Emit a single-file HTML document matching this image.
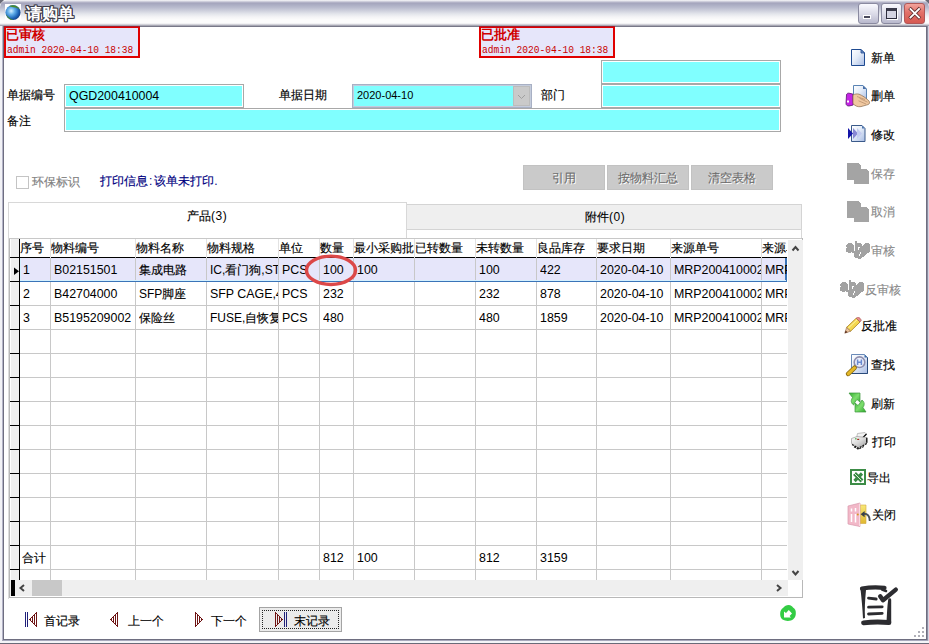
<!DOCTYPE html>
<html><head><meta charset="utf-8">
<style>
*{box-sizing:border-box;margin:0;padding:0}
html,body{width:929px;height:644px;overflow:hidden;background:#fff;font-family:"Liberation Sans",sans-serif;font-size:12px;color:#000}
.a{position:absolute}
#title{left:0;top:0;width:929px;height:26px;border-radius:7px 7px 0 0;background:linear-gradient(#fbfbfb 0px,#dcdce6 1px,#a4a4bc 3px,#acaec4 5px,#bcbed0 8px,#d0d2de 11px,#e4e6ec 14px,#f4f4f6 17px,#fcfcfc 20px,#fcfcfc 23px,#e8e8ec 24px,#a8a8b4 25.5px)}
.t{font-size:12px;line-height:14px;white-space:nowrap}
.inp{background:#80ffff;border:1px solid #a8a8a8;box-shadow:inset 0 0 0 1px #fff}
.rb{border:2px solid #e00000;background:#e6e6fa}
.rb b{position:absolute;left:0px;top:-1px;font-size:13px;line-height:15px;color:#d00000;font-weight:bold}
.rb i{position:absolute;white-space:nowrap;left:1px;top:16px;font-style:normal;font-family:"Liberation Mono",monospace;font-size:11px;line-height:13px;color:#c80000;transform:scaleX(0.87);transform-origin:0 0}
.btn{background:#cacaca;border:1px solid #c2c2c2;color:#6e6e6e;text-align:center;line-height:24px;font-size:12px;text-shadow:1px 1px 0 #fff}
.tbt{font-size:12px;line-height:14px;white-space:nowrap}
.dis{color:#8a8a8a}
.c{-webkit-text-stroke:0.15px currentColor}
#title .c,.rb .c,.tt .c{-webkit-text-stroke:0}
</style></head><body>
<!-- window frame -->
<div class="a" id="title"></div>
<div class="a" style="left:0;top:0;width:4px;height:4px;background:#6a6a78;clip-path:polygon(0 0,100% 0,0 100%)"></div>
<div class="a" style="left:925px;top:0;width:4px;height:4px;background:#6a6a78;clip-path:polygon(0 0,100% 0,100% 100%)"></div>
<div class="a" style="left:0;top:26px;width:929px;height:1px;background:#787888"></div>
<div class="a" style="left:0;top:26px;width:3px;height:618px;background:#f2f2f6"></div>
<div class="a" style="left:2px;top:26px;width:1px;height:614px;background:#b4b4c8"></div>
<div class="a" style="left:3px;top:26px;width:1px;height:614px;background:#6e6e80"></div>
<div class="a" style="left:926px;top:26px;width:1px;height:614px;background:#6e6e80"></div>
<div class="a" style="left:927px;top:26px;width:1px;height:618px;background:#8e8ea2"></div>
<div class="a" style="left:928px;top:26px;width:1px;height:618px;background:#d4d4e2"></div>
<div class="a" style="left:3px;top:639px;width:924px;height:1px;background:#6e6e80"></div>
<div class="a" style="left:2px;top:640px;width:926px;height:1px;background:#a8a8bc"></div>
<div class="a" style="left:0;top:641px;width:929px;height:2px;background:#f4f4f8"></div>
<div class="a" style="left:0;top:643px;width:929px;height:1px;background:#6a6a78"></div>

<!-- title icon + text -->
<div class="a" style="left:5px;top:4px;width:16px;height:16px;background:#fff"></div>
<svg class="a" style="left:5px;top:4px" width="16" height="17">
 <defs><radialGradient id="gl" cx="0.38" cy="0.4" r="0.65"><stop offset="0" stop-color="#d8f0ff"/><stop offset="0.35" stop-color="#64b0ea"/><stop offset="0.75" stop-color="#1c64b8"/><stop offset="1" stop-color="#143e80"/></radialGradient></defs>
 <circle cx="8" cy="8.5" r="7.6" fill="url(#gl)"/>
 <path d="M4 2.2C8 0.2 13 1.5 15.2 6.2C14 4.5 11 3 8 3.2Z" fill="#4a8a2a"/>
 <path d="M1.2 10.5C2 14 5 16 8.5 16.1C6 15 3.5 13.5 1.2 10.5Z" fill="#4a8a2a"/>
</svg>
<div class="a tt" style="left:26px;top:4px;font-size:16px;line-height:20px;font-weight:bold;color:#fff;text-shadow:1px 0 #3c3c48,-1px 0 #3c3c48,0 1px #3c3c48,0 -1px #3c3c48,1px 1px #3c3c48,-1px -1px #3c3c48,1px -1px #3c3c48,-1px 1px #3c3c48"><span class="c">请购单</span></div>

<!-- window buttons -->
<div class="a" style="left:858px;top:3px;width:21px;height:21px;border:1px solid #8a8aa0;border-radius:3px;background:linear-gradient(#fafaff,#d6d6e4 60%,#b8b8cc)"></div>
<div class="a" style="left:863px;top:15px;width:8px;height:4px;background:#4a4a5c;border:1px solid #fff"></div>
<div class="a" style="left:881px;top:3px;width:21px;height:21px;border:1px solid #8a8aa0;border-radius:3px;background:linear-gradient(#fafaff,#d6d6e4 60%,#b8b8cc)"></div>
<div class="a" style="left:886px;top:8px;width:11px;height:11px;border:1px solid #2c2c3c;border-top:3px solid #3a3a4a;background:#d4d4e2;box-shadow:1px 1px 0 #fff"></div>
<div class="a" style="left:904px;top:3px;width:21px;height:21px;border:1px solid #b05858;border-radius:3px;background:linear-gradient(#f2a49c,#e27068 45%,#d65a52)"></div>
<svg class="a" style="left:904px;top:3px" width="21" height="21"><path d="M5.5 5L16 15.5M16 5L5.5 15.5" stroke="#5a2a2a" stroke-width="3.4"/><path d="M5.8 5.3L15.7 15.2M15.7 5.3L5.8 15.2" stroke="#fff" stroke-width="1.9"/></svg>

<!-- red status boxes -->
<div class="a rb" style="left:4px;top:26px;width:136px;height:32px"><b><span class="c">已审核</span></b><i>admin 2020-04-10 18:38</i></div>
<div class="a rb" style="left:479px;top:26px;width:136px;height:32px"><b><span class="c">已批准</span></b><i>admin 2020-04-10 18:38</i></div>
<div class="a" style="left:4px;top:26px;width:136px;height:1px;background:#a81828"></div>
<div class="a" style="left:479px;top:26px;width:136px;height:1px;background:#a81828"></div>

<!-- form -->
<div class="a inp" style="left:601px;top:60px;width:180px;height:24px"></div>
<div class="a t" style="left:7px;top:88px"><span class="c">单据编号</span></div>
<div class="a inp" style="left:64px;top:84px;width:180px;height:24px"></div>
<div class="a t" style="left:69px;top:89px;font-size:12.4px">QGD200410004</div>
<div class="a t" style="left:279px;top:88px"><span class="c">单据日期</span></div>
<div class="a" style="left:352px;top:84px;width:180px;height:24px;background:#80ffff;border:1px solid #a8b0c4;box-shadow:inset 0 0 0 1px #c4ccdc"></div>
<div class="a t" style="left:357px;top:88px;font-size:11px">2020-04-10</div>
<div class="a" style="left:513px;top:86px;width:17px;height:20px;background:#cacaca;border:1px solid #bcbcbc"></div>
<svg class="a" style="left:513px;top:86px" width="17" height="20"><path d="M5 9L8.5 12.5L12 9" stroke="#a0a0a0" stroke-width="1" fill="none"/></svg>
<div class="a t" style="left:541px;top:88px"><span class="c">部门</span></div>
<div class="a inp" style="left:601px;top:84px;width:180px;height:24px"></div>
<div class="a t" style="left:7px;top:114px"><span class="c">备注</span></div>
<div class="a inp" style="left:64px;top:108px;width:717px;height:24px"></div>

<!-- checkbox + print info -->
<div class="a" style="left:16px;top:176px;width:13px;height:13px;border:1px solid #c4c4c4;background:#fff"></div>
<div class="a t" style="left:32px;top:175px;color:#808080"><span class="c">环保标识</span></div>
<div class="a t" style="left:100px;top:174px;color:#000080"><span class="c">打印信息</span><span style="margin:0 2px 0 1px">:</span><span class="c">该单未打印</span>.</div>

<!-- disabled buttons -->
<div class="a btn" style="left:523px;top:165px;width:82px;height:25px"><span class="c">引用</span></div>
<div class="a btn" style="left:607px;top:165px;width:82px;height:25px"><span class="c">按物料汇总</span></div>
<div class="a btn" style="left:691px;top:165px;width:82px;height:25px"><span class="c">清空表格</span></div>

<!-- tabs -->
<div class="a" style="left:406px;top:204px;width:396px;height:26px;background:#efefef;border:1px solid #d4d4d4"></div>
<div class="a" style="left:8px;top:202px;width:399px;height:40px;background:#fff;border:1px solid #d8d8d8;border-bottom:0"></div>
<div class="a" style="left:406px;top:229px;width:396px;height:12px;border-right:1px solid #d8d8d8"></div>
<div class="a t" style="left:187px;top:209px"><span class="c">产品</span><span style="letter-spacing:0.6px">(3)</span></div>
<div class="a t" style="left:585px;top:210px"><span class="c">附件</span><span style="letter-spacing:0.6px">(0)</span></div>

<!-- grid outer -->
<div class="a" style="left:8px;top:238px;width:1px;height:361px;background:#dcdcdc"></div>
<div class="a" style="left:9px;top:238px;width:794px;height:360px;border:1px solid #b8b8b8;border-top:0;background:#fff"></div>
<div class="a" style="left:10px;top:238px;width:777px;height:342px;overflow:hidden;background:#fff">
<div class="a" style="left:1px;top:1px;width:8px;height:400px;background:#efefef"></div>
<div class="a" style="left:0;top:0;width:800px;height:1px;background:#c8c8c8"></div>
<div class="a" style="left:9px;top:43px;width:800px;height:1px;background:#c8c8c8"></div>
<div class="a" style="left:0;top:43px;width:9px;height:1px;background:#000"></div>
<div class="a" style="left:9px;top:67px;width:800px;height:1px;background:#c8c8c8"></div>
<div class="a" style="left:0;top:67px;width:9px;height:1px;background:#000"></div>
<div class="a" style="left:9px;top:91px;width:800px;height:1px;background:#c8c8c8"></div>
<div class="a" style="left:0;top:91px;width:9px;height:1px;background:#000"></div>
<div class="a" style="left:9px;top:115px;width:800px;height:1px;background:#c8c8c8"></div>
<div class="a" style="left:0;top:115px;width:9px;height:1px;background:#000"></div>
<div class="a" style="left:9px;top:139px;width:800px;height:1px;background:#c8c8c8"></div>
<div class="a" style="left:0;top:139px;width:9px;height:1px;background:#000"></div>
<div class="a" style="left:9px;top:163px;width:800px;height:1px;background:#c8c8c8"></div>
<div class="a" style="left:0;top:163px;width:9px;height:1px;background:#000"></div>
<div class="a" style="left:9px;top:187px;width:800px;height:1px;background:#c8c8c8"></div>
<div class="a" style="left:0;top:187px;width:9px;height:1px;background:#000"></div>
<div class="a" style="left:9px;top:211px;width:800px;height:1px;background:#c8c8c8"></div>
<div class="a" style="left:0;top:211px;width:9px;height:1px;background:#000"></div>
<div class="a" style="left:9px;top:235px;width:800px;height:1px;background:#c8c8c8"></div>
<div class="a" style="left:0;top:235px;width:9px;height:1px;background:#000"></div>
<div class="a" style="left:9px;top:259px;width:800px;height:1px;background:#c8c8c8"></div>
<div class="a" style="left:0;top:259px;width:9px;height:1px;background:#000"></div>
<div class="a" style="left:9px;top:283px;width:800px;height:1px;background:#c8c8c8"></div>
<div class="a" style="left:0;top:283px;width:9px;height:1px;background:#000"></div>
<div class="a" style="left:9px;top:307px;width:800px;height:1px;background:#c8c8c8"></div>
<div class="a" style="left:0;top:307px;width:9px;height:1px;background:#000"></div>
<div class="a" style="left:9px;top:331px;width:800px;height:1px;background:#c8c8c8"></div>
<div class="a" style="left:0;top:331px;width:9px;height:1px;background:#000"></div>
<div class="a" style="left:9px;top:355px;width:800px;height:1px;background:#c8c8c8"></div>
<div class="a" style="left:0;top:355px;width:9px;height:1px;background:#000"></div>
<div class="a" style="left:0;top:19px;width:800px;height:1px;background:#000"></div>
<div class="a" style="left:40px;top:1px;width:1px;height:19px;background:#e2e2e2"></div>
<div class="a" style="left:40px;top:20px;width:1px;height:400px;background:#c8c8c8"></div>
<div class="a" style="left:125px;top:1px;width:1px;height:19px;background:#e2e2e2"></div>
<div class="a" style="left:125px;top:20px;width:1px;height:400px;background:#c8c8c8"></div>
<div class="a" style="left:196px;top:1px;width:1px;height:19px;background:#e2e2e2"></div>
<div class="a" style="left:196px;top:20px;width:1px;height:400px;background:#c8c8c8"></div>
<div class="a" style="left:268px;top:1px;width:1px;height:19px;background:#e2e2e2"></div>
<div class="a" style="left:268px;top:20px;width:1px;height:400px;background:#c8c8c8"></div>
<div class="a" style="left:309px;top:1px;width:1px;height:19px;background:#e2e2e2"></div>
<div class="a" style="left:309px;top:20px;width:1px;height:400px;background:#c8c8c8"></div>
<div class="a" style="left:343px;top:1px;width:1px;height:19px;background:#e2e2e2"></div>
<div class="a" style="left:343px;top:20px;width:1px;height:400px;background:#c8c8c8"></div>
<div class="a" style="left:404px;top:1px;width:1px;height:19px;background:#e2e2e2"></div>
<div class="a" style="left:404px;top:20px;width:1px;height:400px;background:#c8c8c8"></div>
<div class="a" style="left:465px;top:1px;width:1px;height:19px;background:#e2e2e2"></div>
<div class="a" style="left:465px;top:20px;width:1px;height:400px;background:#c8c8c8"></div>
<div class="a" style="left:526px;top:1px;width:1px;height:19px;background:#e2e2e2"></div>
<div class="a" style="left:526px;top:20px;width:1px;height:400px;background:#c8c8c8"></div>
<div class="a" style="left:586px;top:1px;width:1px;height:19px;background:#e2e2e2"></div>
<div class="a" style="left:586px;top:20px;width:1px;height:400px;background:#c8c8c8"></div>
<div class="a" style="left:660px;top:1px;width:1px;height:19px;background:#e2e2e2"></div>
<div class="a" style="left:660px;top:20px;width:1px;height:400px;background:#c8c8c8"></div>
<div class="a" style="left:751px;top:1px;width:1px;height:19px;background:#e2e2e2"></div>
<div class="a" style="left:751px;top:20px;width:1px;height:400px;background:#c8c8c8"></div>
<div class="a" style="left:9px;top:1px;width:1px;height:400px;background:#000"></div>
<div class="a" style="left:10px;top:20px;width:767px;height:24px;background:#e6e6fa;border:1px solid #3a74b8;border-left:0;border-top:0"></div>
<div class="a" style="left:10px;top:20px;width:766px;height:23px;border-right:1px solid #3a74b8"></div>
<div class="a" style="left:40px;top:20px;width:1px;height:23px;background:#c8c8c8"></div>
<div class="a" style="left:125px;top:20px;width:1px;height:23px;background:#c8c8c8"></div>
<div class="a" style="left:196px;top:20px;width:1px;height:23px;background:#c8c8c8"></div>
<div class="a" style="left:268px;top:20px;width:1px;height:23px;background:#c8c8c8"></div>
<div class="a" style="left:309px;top:20px;width:1px;height:23px;background:#c8c8c8"></div>
<div class="a" style="left:343px;top:20px;width:1px;height:23px;background:#c8c8c8"></div>
<div class="a" style="left:404px;top:20px;width:1px;height:23px;background:#c8c8c8"></div>
<div class="a" style="left:465px;top:20px;width:1px;height:23px;background:#c8c8c8"></div>
<div class="a" style="left:526px;top:20px;width:1px;height:23px;background:#c8c8c8"></div>
<div class="a" style="left:586px;top:20px;width:1px;height:23px;background:#c8c8c8"></div>
<div class="a" style="left:660px;top:20px;width:1px;height:23px;background:#c8c8c8"></div>
<div class="a" style="left:751px;top:20px;width:1px;height:23px;background:#c8c8c8"></div>
<svg class="a" style="left:0;top:0" width="20" height="300"><path d="M4 29.5L4 37L9 33.25Z" fill="#000"/></svg>
<div class="a" style="left:10px;top:20px;width:1px;height:23px;background:#d4f0ff"></div>
<div class="a" style="left:10px;top:42px;width:766px;height:1px;background:#d4f0ff"></div>
<div class="a t" style="left:10px;top:3px;width:30px;overflow:hidden;white-space:nowrap"><span class="c">序号</span></div>
<div class="a t" style="left:41px;top:3px;width:84px;overflow:hidden;white-space:nowrap"><span class="c">物料编号</span></div>
<div class="a t" style="left:126px;top:3px;width:70px;overflow:hidden;white-space:nowrap"><span class="c">物料名称</span></div>
<div class="a t" style="left:197px;top:3px;width:71px;overflow:hidden;white-space:nowrap"><span class="c">物料规格</span></div>
<div class="a t" style="left:269px;top:3px;width:40px;overflow:hidden;white-space:nowrap"><span class="c">单位</span></div>
<div class="a t" style="left:310px;top:3px;width:33px;overflow:hidden;white-space:nowrap"><span class="c">数量</span></div>
<div class="a t" style="left:344px;top:3px;width:60px;overflow:hidden;white-space:nowrap"><span class="c">最小采购批量</span></div>
<div class="a t" style="left:405px;top:3px;width:60px;overflow:hidden;white-space:nowrap"><span class="c">已转数量</span></div>
<div class="a t" style="left:466px;top:3px;width:60px;overflow:hidden;white-space:nowrap"><span class="c">未转数量</span></div>
<div class="a t" style="left:527px;top:3px;width:59px;overflow:hidden;white-space:nowrap"><span class="c">良品库存</span></div>
<div class="a t" style="left:587px;top:3px;width:73px;overflow:hidden;white-space:nowrap"><span class="c">要求日期</span></div>
<div class="a t" style="left:661px;top:3px;width:90px;overflow:hidden;white-space:nowrap"><span class="c">来源单号</span></div>
<div class="a t" style="left:752px;top:3px;width:25px;overflow:hidden;white-space:nowrap"><span class="c">来源单位</span></div>
<div class="a t" style="left:13px;top:25px;width:27px;overflow:hidden;white-space:nowrap;font-size:12.4px">1</div>
<div class="a t" style="left:44px;top:25px;width:81px;overflow:hidden;white-space:nowrap;font-size:12.4px">B02151501</div>
<div class="a t" style="left:129px;top:25px;width:67px;overflow:hidden;white-space:nowrap"><span class="c">集成电路</span></div>
<div class="a t" style="left:200px;top:25px;width:68px;overflow:hidden;white-space:nowrap">IC,<span class="c">看门狗</span>,STM</div>
<div class="a t" style="left:272px;top:25px;width:37px;overflow:hidden;white-space:nowrap;font-size:12.4px">PCS</div>
<div class="a t" style="left:313px;top:25px;width:30px;overflow:hidden;white-space:nowrap;font-size:12.4px">100</div>
<div class="a t" style="left:347px;top:25px;width:57px;overflow:hidden;white-space:nowrap;font-size:12.4px">100</div>
<div class="a t" style="left:469px;top:25px;width:57px;overflow:hidden;white-space:nowrap;font-size:12.4px">100</div>
<div class="a t" style="left:530px;top:25px;width:56px;overflow:hidden;white-space:nowrap;font-size:12.4px">422</div>
<div class="a t" style="left:590px;top:25px;width:70px;overflow:hidden;white-space:nowrap;font-size:12.4px">2020-04-10</div>
<div class="a t" style="left:664px;top:25px;width:87px;overflow:hidden;white-space:nowrap;font-size:12.4px">MRP200410002</div>
<div class="a t" style="left:755px;top:25px;width:22px;overflow:hidden;white-space:nowrap;font-size:12.4px">MRP200410002</div>
<div class="a t" style="left:13px;top:49px;width:27px;overflow:hidden;white-space:nowrap;font-size:12.4px">2</div>
<div class="a t" style="left:44px;top:49px;width:81px;overflow:hidden;white-space:nowrap;font-size:12.4px">B42704000</div>
<div class="a t" style="left:129px;top:49px;width:67px;overflow:hidden;white-space:nowrap">SFP<span class="c">脚座</span></div>
<div class="a t" style="left:200px;top:49px;width:68px;overflow:hidden;white-space:nowrap;font-size:12.4px">SFP CAGE,4PIN</div>
<div class="a t" style="left:272px;top:49px;width:37px;overflow:hidden;white-space:nowrap;font-size:12.4px">PCS</div>
<div class="a t" style="left:313px;top:49px;width:30px;overflow:hidden;white-space:nowrap;font-size:12.4px">232</div>
<div class="a t" style="left:469px;top:49px;width:57px;overflow:hidden;white-space:nowrap;font-size:12.4px">232</div>
<div class="a t" style="left:530px;top:49px;width:56px;overflow:hidden;white-space:nowrap;font-size:12.4px">878</div>
<div class="a t" style="left:590px;top:49px;width:70px;overflow:hidden;white-space:nowrap;font-size:12.4px">2020-04-10</div>
<div class="a t" style="left:664px;top:49px;width:87px;overflow:hidden;white-space:nowrap;font-size:12.4px">MRP200410002</div>
<div class="a t" style="left:755px;top:49px;width:22px;overflow:hidden;white-space:nowrap;font-size:12.4px">MRP200410002</div>
<div class="a t" style="left:13px;top:73px;width:27px;overflow:hidden;white-space:nowrap;font-size:12.4px">3</div>
<div class="a t" style="left:44px;top:73px;width:81px;overflow:hidden;white-space:nowrap;font-size:12.4px">B5195209002</div>
<div class="a t" style="left:129px;top:73px;width:67px;overflow:hidden;white-space:nowrap"><span class="c">保险丝</span></div>
<div class="a t" style="left:200px;top:73px;width:68px;overflow:hidden;white-space:nowrap">FUSE,<span class="c">自恢复</span></div>
<div class="a t" style="left:272px;top:73px;width:37px;overflow:hidden;white-space:nowrap;font-size:12.4px">PCS</div>
<div class="a t" style="left:313px;top:73px;width:30px;overflow:hidden;white-space:nowrap;font-size:12.4px">480</div>
<div class="a t" style="left:469px;top:73px;width:57px;overflow:hidden;white-space:nowrap;font-size:12.4px">480</div>
<div class="a t" style="left:530px;top:73px;width:56px;overflow:hidden;white-space:nowrap;font-size:12.4px">1859</div>
<div class="a t" style="left:590px;top:73px;width:70px;overflow:hidden;white-space:nowrap;font-size:12.4px">2020-04-10</div>
<div class="a t" style="left:664px;top:73px;width:87px;overflow:hidden;white-space:nowrap;font-size:12.4px">MRP200410002</div>
<div class="a t" style="left:755px;top:73px;width:22px;overflow:hidden;white-space:nowrap;font-size:12.4px">MRP200410002</div>
<div class="a t" style="left:12px;top:313px;width:28px;overflow:hidden;white-space:nowrap"><span class="c">合计</span></div>
<div class="a t" style="left:313px;top:313px;width:30px;overflow:hidden;white-space:nowrap;font-size:12.4px">812</div>
<div class="a t" style="left:347px;top:313px;width:57px;overflow:hidden;white-space:nowrap;font-size:12.4px">100</div>
<div class="a t" style="left:469px;top:313px;width:57px;overflow:hidden;white-space:nowrap;font-size:12.4px">812</div>
<div class="a t" style="left:530px;top:313px;width:56px;overflow:hidden;white-space:nowrap;font-size:12.4px">3159</div>
</div>
<!-- v scrollbar -->
<div class="a" style="left:9px;top:238px;width:793px;height:1px;background:#c8c8c8"></div>
<div class="a" style="left:788px;top:240px;width:15px;height:340px;background:#efefef"></div>
<svg class="a" style="left:788px;top:238px" width="15" height="342"><path d="M4.5 12.5L7.5 9L10.5 12.5" stroke="#444" stroke-width="2" fill="none"/><path d="M4.5 333L7.5 336.5L10.5 333" stroke="#444" stroke-width="2" fill="none"/></svg>
<!-- h scrollbar -->
<div class="a" style="left:10px;top:580px;width:778px;height:16px;background:#efefef"></div>
<div class="a" style="left:11px;top:580px;width:4px;height:16px;background:#000"></div>
<div class="a" style="left:32px;top:580px;width:30px;height:16px;background:#c8c8c8"></div>
<svg class="a" style="left:10px;top:580px" width="778" height="16"><path d="M14 5L10.5 8L14 11" stroke="#444" stroke-width="2" fill="none"/><path d="M767 5L770.5 8L767 11" stroke="#444" stroke-width="2" fill="none"/></svg>

<!-- nav -->
<div class="a t" style="left:44px;top:614px;font-size:12px"><span class="c">首记录</span></div>
<div class="a t" style="left:128px;top:614px;font-size:12px"><span class="c">上一个</span></div>
<div class="a t" style="left:211px;top:614px;font-size:12px"><span class="c">下一个</span></div>
<div class="a" style="left:259px;top:607px;width:83px;height:25px;background:#ebebeb;border:1px solid #a4a4a4"></div>
<div class="a" style="left:262px;top:610px;width:77px;height:19px;border:1px dotted #222"></div>
<svg class="a" style="left:0;top:0" width="400" height="644" shape-rendering="crispEdges"><g fill="#20207a"><rect x="25" y="612" width="1" height="15"/><rect x="27" y="612" width="1" height="15"/><rect x="284" y="612" width="1" height="15"/><rect x="286" y="612" width="1" height="15"/></g><g fill="#6e1414"><rect x="29" y="619" width="1" height="1"/><rect x="30" y="618" width="1" height="1"/><rect x="30" y="619" width="1" height="1"/><rect x="30" y="620" width="1" height="1"/><rect x="31" y="617" width="1" height="1"/><rect x="31" y="621" width="1" height="1"/><rect x="32" y="616" width="1" height="1"/><rect x="32" y="617" width="1" height="1"/><rect x="32" y="618" width="1" height="1"/><rect x="32" y="619" width="1" height="1"/><rect x="32" y="620" width="1" height="1"/><rect x="32" y="621" width="1" height="1"/><rect x="32" y="622" width="1" height="1"/><rect x="33" y="615" width="1" height="1"/><rect x="33" y="623" width="1" height="1"/><rect x="34" y="614" width="1" height="1"/><rect x="34" y="615" width="1" height="1"/><rect x="34" y="616" width="1" height="1"/><rect x="34" y="617" width="1" height="1"/><rect x="34" y="618" width="1" height="1"/><rect x="34" y="619" width="1" height="1"/><rect x="34" y="620" width="1" height="1"/><rect x="34" y="621" width="1" height="1"/><rect x="34" y="622" width="1" height="1"/><rect x="34" y="623" width="1" height="1"/><rect x="34" y="624" width="1" height="1"/><rect x="35" y="613" width="1" height="1"/><rect x="35" y="625" width="1" height="1"/><rect x="36" y="612" width="1" height="1"/><rect x="36" y="613" width="1" height="1"/><rect x="36" y="614" width="1" height="1"/><rect x="36" y="615" width="1" height="1"/><rect x="36" y="616" width="1" height="1"/><rect x="36" y="617" width="1" height="1"/><rect x="36" y="618" width="1" height="1"/><rect x="36" y="619" width="1" height="1"/><rect x="36" y="620" width="1" height="1"/><rect x="36" y="621" width="1" height="1"/><rect x="36" y="622" width="1" height="1"/><rect x="36" y="623" width="1" height="1"/><rect x="36" y="624" width="1" height="1"/><rect x="36" y="625" width="1" height="1"/><rect x="36" y="626" width="1" height="1"/><rect x="110" y="619" width="1" height="1"/><rect x="111" y="618" width="1" height="1"/><rect x="111" y="619" width="1" height="1"/><rect x="111" y="620" width="1" height="1"/><rect x="112" y="617" width="1" height="1"/><rect x="112" y="621" width="1" height="1"/><rect x="113" y="616" width="1" height="1"/><rect x="113" y="617" width="1" height="1"/><rect x="113" y="618" width="1" height="1"/><rect x="113" y="619" width="1" height="1"/><rect x="113" y="620" width="1" height="1"/><rect x="113" y="621" width="1" height="1"/><rect x="113" y="622" width="1" height="1"/><rect x="114" y="615" width="1" height="1"/><rect x="114" y="623" width="1" height="1"/><rect x="115" y="614" width="1" height="1"/><rect x="115" y="615" width="1" height="1"/><rect x="115" y="616" width="1" height="1"/><rect x="115" y="617" width="1" height="1"/><rect x="115" y="618" width="1" height="1"/><rect x="115" y="619" width="1" height="1"/><rect x="115" y="620" width="1" height="1"/><rect x="115" y="621" width="1" height="1"/><rect x="115" y="622" width="1" height="1"/><rect x="115" y="623" width="1" height="1"/><rect x="115" y="624" width="1" height="1"/><rect x="116" y="613" width="1" height="1"/><rect x="116" y="625" width="1" height="1"/><rect x="117" y="612" width="1" height="1"/><rect x="117" y="613" width="1" height="1"/><rect x="117" y="614" width="1" height="1"/><rect x="117" y="615" width="1" height="1"/><rect x="117" y="616" width="1" height="1"/><rect x="117" y="617" width="1" height="1"/><rect x="117" y="618" width="1" height="1"/><rect x="117" y="619" width="1" height="1"/><rect x="117" y="620" width="1" height="1"/><rect x="117" y="621" width="1" height="1"/><rect x="117" y="622" width="1" height="1"/><rect x="117" y="623" width="1" height="1"/><rect x="117" y="624" width="1" height="1"/><rect x="117" y="625" width="1" height="1"/><rect x="117" y="626" width="1" height="1"/><rect x="202" y="619" width="1" height="1"/><rect x="201" y="618" width="1" height="1"/><rect x="201" y="619" width="1" height="1"/><rect x="201" y="620" width="1" height="1"/><rect x="200" y="617" width="1" height="1"/><rect x="200" y="621" width="1" height="1"/><rect x="199" y="616" width="1" height="1"/><rect x="199" y="617" width="1" height="1"/><rect x="199" y="618" width="1" height="1"/><rect x="199" y="619" width="1" height="1"/><rect x="199" y="620" width="1" height="1"/><rect x="199" y="621" width="1" height="1"/><rect x="199" y="622" width="1" height="1"/><rect x="198" y="615" width="1" height="1"/><rect x="198" y="623" width="1" height="1"/><rect x="197" y="614" width="1" height="1"/><rect x="197" y="615" width="1" height="1"/><rect x="197" y="616" width="1" height="1"/><rect x="197" y="617" width="1" height="1"/><rect x="197" y="618" width="1" height="1"/><rect x="197" y="619" width="1" height="1"/><rect x="197" y="620" width="1" height="1"/><rect x="197" y="621" width="1" height="1"/><rect x="197" y="622" width="1" height="1"/><rect x="197" y="623" width="1" height="1"/><rect x="197" y="624" width="1" height="1"/><rect x="196" y="613" width="1" height="1"/><rect x="196" y="625" width="1" height="1"/><rect x="195" y="612" width="1" height="1"/><rect x="195" y="613" width="1" height="1"/><rect x="195" y="614" width="1" height="1"/><rect x="195" y="615" width="1" height="1"/><rect x="195" y="616" width="1" height="1"/><rect x="195" y="617" width="1" height="1"/><rect x="195" y="618" width="1" height="1"/><rect x="195" y="619" width="1" height="1"/><rect x="195" y="620" width="1" height="1"/><rect x="195" y="621" width="1" height="1"/><rect x="195" y="622" width="1" height="1"/><rect x="195" y="623" width="1" height="1"/><rect x="195" y="624" width="1" height="1"/><rect x="195" y="625" width="1" height="1"/><rect x="195" y="626" width="1" height="1"/><rect x="282" y="619" width="1" height="1"/><rect x="281" y="618" width="1" height="1"/><rect x="281" y="619" width="1" height="1"/><rect x="281" y="620" width="1" height="1"/><rect x="280" y="617" width="1" height="1"/><rect x="280" y="621" width="1" height="1"/><rect x="279" y="616" width="1" height="1"/><rect x="279" y="617" width="1" height="1"/><rect x="279" y="618" width="1" height="1"/><rect x="279" y="619" width="1" height="1"/><rect x="279" y="620" width="1" height="1"/><rect x="279" y="621" width="1" height="1"/><rect x="279" y="622" width="1" height="1"/><rect x="278" y="615" width="1" height="1"/><rect x="278" y="623" width="1" height="1"/><rect x="277" y="614" width="1" height="1"/><rect x="277" y="615" width="1" height="1"/><rect x="277" y="616" width="1" height="1"/><rect x="277" y="617" width="1" height="1"/><rect x="277" y="618" width="1" height="1"/><rect x="277" y="619" width="1" height="1"/><rect x="277" y="620" width="1" height="1"/><rect x="277" y="621" width="1" height="1"/><rect x="277" y="622" width="1" height="1"/><rect x="277" y="623" width="1" height="1"/><rect x="277" y="624" width="1" height="1"/><rect x="276" y="613" width="1" height="1"/><rect x="276" y="625" width="1" height="1"/><rect x="275" y="612" width="1" height="1"/><rect x="275" y="613" width="1" height="1"/><rect x="275" y="614" width="1" height="1"/><rect x="275" y="615" width="1" height="1"/><rect x="275" y="616" width="1" height="1"/><rect x="275" y="617" width="1" height="1"/><rect x="275" y="618" width="1" height="1"/><rect x="275" y="619" width="1" height="1"/><rect x="275" y="620" width="1" height="1"/><rect x="275" y="621" width="1" height="1"/><rect x="275" y="622" width="1" height="1"/><rect x="275" y="623" width="1" height="1"/><rect x="275" y="624" width="1" height="1"/><rect x="275" y="625" width="1" height="1"/><rect x="275" y="626" width="1" height="1"/></g></svg><svg class="a" style="left:0;top:0" width="929" height="644" shape-rendering="crispEdges"><g fill="#a2a2a2"><rect x="855" y="241" width="2" height="1"/><rect x="855" y="242" width="2" height="1"/><rect x="848" y="243" width="4" height="1"/><rect x="855" y="243" width="6" height="1"/><rect x="865" y="243" width="4" height="1"/><rect x="847" y="244" width="6" height="1"/><rect x="855" y="244" width="7" height="1"/><rect x="864" y="244" width="6" height="1"/><rect x="846" y="245" width="8" height="1"/><rect x="855" y="245" width="7" height="1"/><rect x="863" y="245" width="7" height="1"/><rect x="846" y="246" width="8" height="1"/><rect x="855" y="246" width="15" height="1"/><rect x="847" y="247" width="7" height="1"/><rect x="855" y="247" width="3" height="1"/><rect x="860" y="247" width="10" height="1"/><rect x="846" y="248" width="8" height="1"/><rect x="855" y="248" width="3" height="1"/><rect x="859" y="248" width="11" height="1"/><rect x="846" y="249" width="8" height="1"/><rect x="855" y="249" width="3" height="1"/><rect x="859" y="249" width="11" height="1"/><rect x="846" y="250" width="8" height="1"/><rect x="855" y="250" width="15" height="1"/><rect x="846" y="251" width="8" height="1"/><rect x="854" y="251" width="16" height="1"/><rect x="848" y="252" width="3" height="1"/><rect x="852" y="252" width="2" height="1"/><rect x="854" y="252" width="6" height="1"/><rect x="861" y="252" width="8" height="1"/><rect x="854" y="253" width="6" height="1"/><rect x="861" y="253" width="6" height="1"/><rect x="854" y="254" width="5" height="1"/><rect x="860" y="254" width="6" height="1"/><rect x="854" y="255" width="5" height="1"/><rect x="860" y="255" width="5" height="1"/><rect x="854" y="256" width="10" height="1"/><rect x="855" y="257" width="7" height="1"/><rect x="858" y="258" width="3" height="1"/></g><g fill="#a2a2a2"><rect x="849" y="280" width="2" height="1"/><rect x="849" y="281" width="2" height="1"/><rect x="842" y="282" width="4" height="1"/><rect x="849" y="282" width="6" height="1"/><rect x="859" y="282" width="4" height="1"/><rect x="841" y="283" width="6" height="1"/><rect x="849" y="283" width="7" height="1"/><rect x="858" y="283" width="6" height="1"/><rect x="840" y="284" width="8" height="1"/><rect x="849" y="284" width="7" height="1"/><rect x="857" y="284" width="7" height="1"/><rect x="840" y="285" width="8" height="1"/><rect x="849" y="285" width="15" height="1"/><rect x="841" y="286" width="7" height="1"/><rect x="849" y="286" width="3" height="1"/><rect x="854" y="286" width="10" height="1"/><rect x="840" y="287" width="8" height="1"/><rect x="849" y="287" width="3" height="1"/><rect x="853" y="287" width="11" height="1"/><rect x="840" y="288" width="8" height="1"/><rect x="849" y="288" width="3" height="1"/><rect x="853" y="288" width="11" height="1"/><rect x="840" y="289" width="8" height="1"/><rect x="849" y="289" width="15" height="1"/><rect x="840" y="290" width="8" height="1"/><rect x="848" y="290" width="16" height="1"/><rect x="842" y="291" width="3" height="1"/><rect x="846" y="291" width="2" height="1"/><rect x="848" y="291" width="6" height="1"/><rect x="855" y="291" width="8" height="1"/><rect x="848" y="292" width="6" height="1"/><rect x="855" y="292" width="6" height="1"/><rect x="848" y="293" width="5" height="1"/><rect x="854" y="293" width="6" height="1"/><rect x="848" y="294" width="5" height="1"/><rect x="854" y="294" width="5" height="1"/><rect x="848" y="295" width="10" height="1"/><rect x="849" y="296" width="7" height="1"/><rect x="852" y="297" width="3" height="1"/></g></svg>
<div class="a t" style="left:294px;top:614px;font-size:12px"><span class="c">末记录</span></div>

<!-- right toolbar -->
<div id="tb"></div>
<div class="a tbt" style="left:871px;top:51px"><span class="c">新单</span></div>
<div class="a tbt" style="left:871px;top:89px"><span class="c">删单</span></div>
<div class="a tbt" style="left:871px;top:128px"><span class="c">修改</span></div>
<div class="a tbt dis" style="left:871px;top:167px"><span class="c">保存</span></div>
<div class="a tbt dis" style="left:871px;top:205px"><span class="c">取消</span></div>
<div class="a tbt dis" style="left:871px;top:244px"><span class="c">审核</span></div>
<div class="a tbt dis" style="left:865px;top:283px"><span class="c">反审核</span></div>
<div class="a tbt" style="left:861px;top:319px"><span class="c">反批准</span></div>
<div class="a tbt" style="left:871px;top:358px"><span class="c">查找</span></div>
<div class="a tbt" style="left:871px;top:397px"><span class="c">刷新</span></div>
<div class="a tbt" style="left:872px;top:435px"><span class="c">打印</span></div>
<div class="a tbt" style="left:867px;top:471px"><span class="c">导出</span></div>
<div class="a tbt" style="left:872px;top:508px"><span class="c">关闭</span></div>

<!-- icons -->
<!-- new doc -->
<svg class="a" style="left:850px;top:48px" width="18" height="20">
 <defs><linearGradient id="dg" x1="0" y1="0" x2="1" y2="1"><stop offset="0" stop-color="#ffffff"/><stop offset="0.45" stop-color="#e4ecf8"/><stop offset="1" stop-color="#a8bce4"/></linearGradient></defs>
 <path d="M1.5 1.5H11L14.5 5V17.5H1.5Z" fill="url(#dg)" stroke="#1e4a90"/>
 <path d="M11 1.5V5H14.5Z" fill="#7090c8" stroke="#1e4a90" stroke-width="0.8"/>
</svg>
<!-- delete: doc + hand -->
<svg class="a" style="left:845px;top:84px" width="26" height="24">
 <path d="M8.5 1.5H18L21.5 5V17H8.5Z" fill="url(#dg)" stroke="#5a84b4"/>
 <path d="M18 1.5V5H21.5Z" fill="#4a70a8"/>
 <path d="M1.5 11C1.5 9.5 3 9 4 9.2L7.8 10L8.2 21L4 22C2.2 22 1 21 1 19.5Z" fill="#c424e4" stroke="#5a1070" stroke-width="0.8"/>
 <rect x="2" y="16.5" width="2" height="2" fill="#fff"/>
 <path d="M8 11C10 10 12 9.6 14 10.2C17.5 11.5 21 14 24 17C25 18.5 24.5 20.2 23 20.6L16 22.6C13 23.2 10 22 8 19.5Z" fill="#f0c8a0" stroke="#8a6848" stroke-width="0.7"/>
 <path d="M14.5 14.2L22.5 18.2M13.5 16.8L21 20M12 12.5L20 15.5" stroke="#a88060" stroke-width="0.6"/>
</svg>
<!-- modify -->
<svg class="a" style="left:847px;top:124px" width="20" height="20">
 <path d="M4.5 1.5H15L18 4.5V17.5H4.5Z" fill="url(#dg)" stroke="#3a5a8a"/>
 <path d="M15 1.5V4.5H18Z" fill="#5078b0"/>
 <path d="M1 4L6 9.5L1 15Z" fill="#1414a8"/>
 <path d="M6 4L11 9.5L6 15Z" fill="#8888d4"/>
 <path d="M10 4L15 9.5L10 15Z" fill="#c4ccf0"/>
</svg>
<!-- save/cancel gray -->
<svg class="a" style="left:847px;top:162px" width="23" height="23" shape-rendering="crispEdges">
 <path d="M0 1H11L14 4V18H0Z" fill="#a4a4a4"/><path d="M7 7H19L22 10V22H7Z" fill="#a4a4a4"/>
</svg>
<svg class="a" style="left:847px;top:200px" width="23" height="23" shape-rendering="crispEdges">
 <path d="M0 1H11L14 4V18H0Z" fill="#a4a4a4"/><path d="M7 7H19L22 10V22H7Z" fill="#a4a4a4"/>
</svg>
<!-- pencil -->
<svg class="a" style="left:844px;top:317px" width="18" height="17">
 <path d="M2.6 10.4L12.2 1.2L16 5L6.6 14.2Z" fill="#f4d850" stroke="#a87c18" stroke-width="0.8"/>
 <path d="M4.2 11.2L13.2 2.6" stroke="#fff4b0" stroke-width="1"/>
 <path d="M2.6 10.4L6.6 14.2L0.8 16.2Z" fill="#ecc49c" stroke="#906848" stroke-width="0.6"/>
 <path d="M0.8 16.2L1.6 13.4L3.6 15.2Z" fill="#5a3020"/>
 <path d="M12.2 1.2L16 5L17.2 3.6C17.4 2.4 15.2 0 13.8 0Z" fill="#e88c8c" stroke="#a05858" stroke-width="0.6"/>
</svg>
<!-- find -->
<svg class="a" style="left:845px;top:353px" width="25" height="24">
 <path d="M6.5 1.5H19.5L22.5 4.5V20.5H6.5Z" fill="url(#dg)" stroke="#6a8ab8"/>
 <path d="M22.5 4.5V20.5H6.5" fill="none" stroke="#2a4a7a"/>
 <path d="M19.5 1.5V4.5H22.5Z" fill="#3a6aa8"/>
 <circle cx="14.5" cy="9.2" r="5.3" fill="#eaeefa" stroke="#8e8eae" stroke-width="1.6"/>
 <path d="M12.6 6.5V12M16.4 6.5V12M12.6 9.2H16.4" stroke="#6a8ad0" stroke-width="1.5"/>
 <path d="M3.2 20.8L9.5 14.8" stroke="#8a6a10" stroke-width="4.6" stroke-linecap="round"/>
 <path d="M3.2 20.8L9.5 14.8" stroke="#e4b828" stroke-width="3" stroke-linecap="round"/>
</svg>
<!-- refresh -->
<svg class="a" style="left:846px;top:390px" width="22" height="24">
 <defs><linearGradient id="gg" x1="0" y1="0" x2="1" y2="1"><stop offset="0" stop-color="#2fae2f"/><stop offset="0.5" stop-color="#7ede6e"/><stop offset="1" stop-color="#2aa82a"/></linearGradient></defs>
 <path d="M3 3H14V12L11 9.5C9.5 11 8.5 13 7.5 15C5 13 4.5 10.5 6.5 7.5Z" fill="url(#gg)" stroke="#3c963c" stroke-width="0.7"/>
 <path d="M20 22H9V13L12 15.5C13.5 14 14.5 12 16 10C18.5 12 19 14.5 17 17.5Z" fill="url(#gg)" stroke="#3c963c" stroke-width="0.7"/>
</svg>
<!-- print -->
<svg class="a" style="left:848px;top:428px" width="22" height="22">
 <defs><linearGradient id="pg" x1="0" y1="0" x2="1" y2="1"><stop offset="0" stop-color="#ffffff"/><stop offset="0.5" stop-color="#d8d8d8"/><stop offset="1" stop-color="#9a9a9a"/></linearGradient></defs>
 <path d="M9.5 5.5L17 4.5L18.5 6L14 10.5L8.5 10Z" fill="#f2f2f2" stroke="#a8a8a8" stroke-width="0.7"/>
 <path d="M18.5 6L14 10.5" stroke="#000" stroke-width="1.1"/>
 <path d="M3.5 10.5L9 8.5L18.8 9.5L19 15L10.5 19.5L3.5 15.5Z" fill="url(#pg)" stroke="#9c9c9c" stroke-width="0.7"/>
 <path d="M18.8 9.8V14.8" stroke="#000" stroke-width="1.2"/>
 <path d="M4 16.5L10.5 20.2L18.8 15.5" fill="none" stroke="#111" stroke-width="1.2" stroke-dasharray="2 1"/>
 <path d="M6 18.8L10.5 21.2L16.5 18" fill="none" stroke="#111" stroke-width="1.1" stroke-dasharray="2 1"/>
 <rect x="7" y="10.2" width="1.6" height="1.2" fill="#50b050"/><rect x="9.2" y="10.8" width="2" height="1.2" fill="#a03020"/>
</svg>
<!-- excel -->
<svg class="a" style="left:849px;top:468px" width="18" height="18" shape-rendering="crispEdges">
 <rect x="1" y="1" width="16" height="16" fill="#3c8c46"/>
 <rect x="3" y="3" width="12" height="12" fill="#fff"/>
</svg>
<svg class="a" style="left:849px;top:468px" width="18" height="18">
 <path d="M5.5 5.5L13 13" stroke="#3a8a44" stroke-width="4"/>
 <path d="M13 5.5L5.5 13" stroke="#3a8a44" stroke-width="3.2"/>
 <path d="M5 5L12.5 12.5" stroke="#e8f8e8" stroke-width="0.9"/>
</svg>
<!-- door/close -->
<svg class="a" style="left:847px;top:502px" width="25" height="25">
 <defs><linearGradient id="yg" x1="0" y1="0" x2="0" y2="1"><stop offset="0" stop-color="#f8e878"/><stop offset="1" stop-color="#e0b830"/></linearGradient></defs>
 <path d="M13 3H19V21.5H13Z" fill="url(#yg)" stroke="#d0a840" stroke-width="0.6"/>
 <path d="M1 4L13 1V24.5L1 22Z" fill="#f2b8c8" stroke="#d898ac" stroke-width="0.7"/>
 <path d="M12.6 1.5V24" stroke="#fde8ee" stroke-width="0.8"/>
 <path d="M4.5 6.5V9.5M8.5 6V9.5M4.5 12V20M8.5 12V20.5" stroke="#fff" stroke-width="1.5"/>
 <circle cx="10.8" cy="12.5" r="1" fill="#d89820"/>
 <path d="M22.8 19C22.8 14 20.5 11.5 16.5 11.8" fill="none" stroke="#4a5058" stroke-width="2"/>
 <path d="M13.6 12.2L17.6 9L17.6 15.2Z" fill="#3a4048"/>
</svg>
<!-- green home -->
<svg class="a" style="left:779px;top:604px" width="18" height="18">
 <path d="M9.5 1C12 1 13.5 2.5 14 3.5C16 4.5 17 6.5 16.8 9C17 12.5 15 15.5 12 16.5C9 17.2 6 17 3.5 15.5C1.5 14 1 11.5 1.2 9C1.4 6.5 2.5 5 4 4C5.5 2 7.5 1 9.5 1Z" fill="#33cc44"/>
 <path d="M5 7.5L7 9L9.8 6L13 9.5L10.6 12L12 13.5H5Z" fill="#fff"/>
</svg>
<!-- big bottom-right icon -->
<svg class="a" style="left:850px;top:578px" width="60" height="54">
 <g transform="translate(-850,-578)" fill="#2c2c30" stroke="#2c2c30" stroke-linecap="round" stroke-linejoin="round">
  <path d="M862 588.5Q873 586.5 884.5 587.8" fill="none" stroke-width="4.2"/>
  <path d="M882 589.5L886 591" fill="none" stroke-width="2.5"/>
  <path d="M860.5 589L866 590C865 600 864.5 610 865 618L863 618.5C862.5 608 861.5 598 860.5 589Z" stroke="none"/>
  <path d="M863.5 622.8Q876 621.4 889 622.5" fill="none" stroke-width="4.8"/>
  <path d="M888.2 599.5C889 597.8 891.2 598 891.2 600L891.2 622L886.5 622C887 614 887.2 606 888.2 599.5Z" stroke="none"/>
  <path d="M880.2 596.2L883 600.3L895.8 589.6" fill="none" stroke-width="4.4"/>
  <path d="M868.5 598.2L876.2 599" fill="none" stroke-width="2.8"/>
  <path d="M868.5 607.2L882.2 606.8" fill="none" stroke-width="2.8"/>
  <path d="M868.5 614L882.2 613.4" fill="none" stroke-width="2.8"/>
 </g>
</svg>
<!-- grip -->
<svg class="a" style="left:913px;top:626px" width="12" height="12">
 <rect x="9" y="1" width="2" height="2" fill="#b0b0b8"/>
 <rect x="5" y="5" width="2" height="2" fill="#b0b0b8"/><rect x="9" y="5" width="2" height="2" fill="#b0b0b8"/>
 <rect x="1" y="9" width="2" height="2" fill="#b0b0b8"/><rect x="5" y="9" width="2" height="2" fill="#b0b0b8"/><rect x="9" y="9" width="2" height="2" fill="#b0b0b8"/>
</svg>
<!-- red ellipse annotation -->
<svg class="a" style="left:300px;top:250px" width="62" height="40">
 <ellipse cx="31" cy="20.3" rx="24.5" ry="14.2" fill="none" stroke="#dc4848" stroke-width="3.4"/>
</svg>
</body></html>
